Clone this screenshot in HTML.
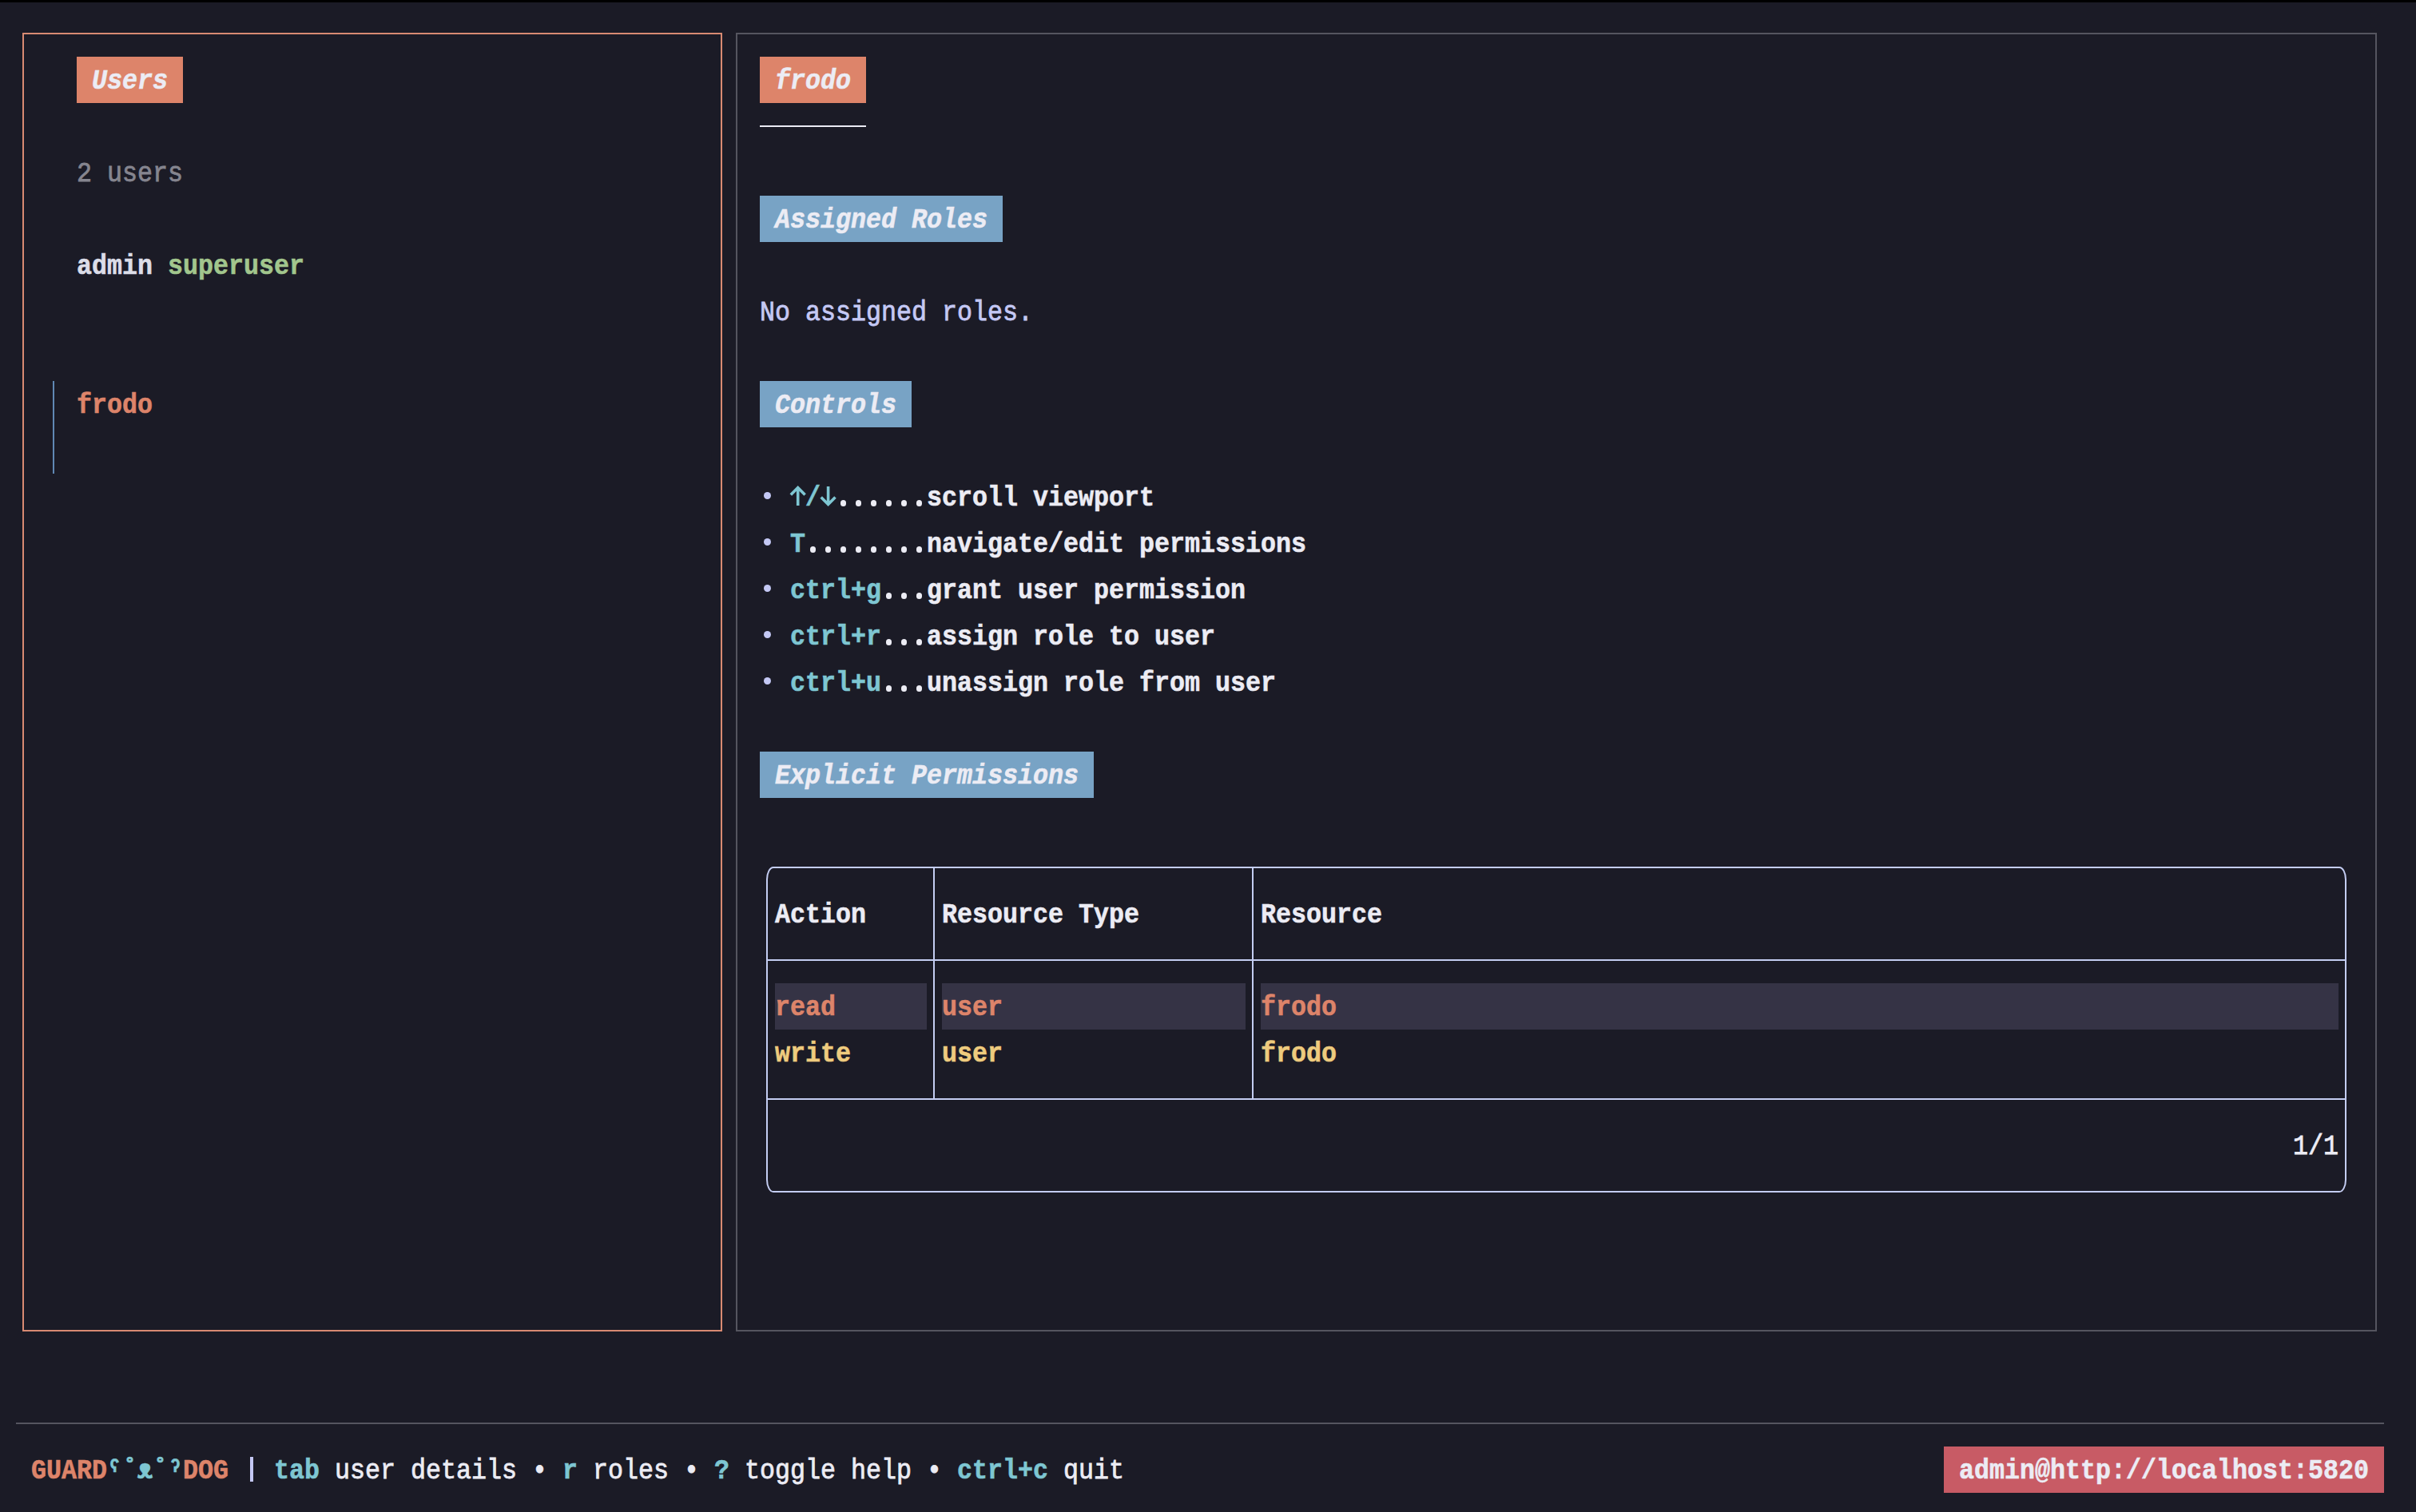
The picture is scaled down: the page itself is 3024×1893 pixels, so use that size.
<!DOCTYPE html>
<html><head><meta charset="utf-8"><style>
html,body{margin:0;padding:0;}
body{width:3024px;height:1893px;background:#1b1b26;position:relative;overflow:hidden;font-family:"Liberation Mono",monospace;}
body>div{position:absolute;}
.t{position:absolute;white-space:pre;font-size:35px;line-height:58px;transform:scaleX(0.90476);transform-origin:0 0;}
</style></head><body>
<div style="left:0px;top:0px;width:3024px;height:3px;background:#000"></div>
<div style="left:28px;top:41px;width:876px;height:2px;background:#d88a72"></div>
<div style="left:28px;top:1665px;width:876px;height:2px;background:#d88a72"></div>
<div style="left:28px;top:41px;width:2px;height:1626px;background:#d88a72"></div>
<div style="left:902px;top:41px;width:2px;height:1626px;background:#d88a72"></div>
<div style="left:96px;top:71px;width:133px;height:58px;background:#dd846a"></div>
<span class="t" style="left:115px;top:73px;color:#ececf4;font-weight:bold;-webkit-text-stroke:0.6px #ececf4;font-style:italic;">Users</span>
<span class="t" style="left:96px;top:189px;color:#85858f;-webkit-text-stroke:0.8px #85858f;">2 users</span>
<span class="t" style="left:96px;top:305px;color:#dcdde8;font-weight:bold;-webkit-text-stroke:0.6px #dcdde8;">admin</span>
<span class="t" style="left:210px;top:305px;color:#a2c68d;font-weight:bold;-webkit-text-stroke:0.6px #a2c68d;">superuser</span>
<span class="t" style="left:96px;top:479px;color:#dd846a;font-weight:bold;-webkit-text-stroke:0.6px #dd846a;">frodo</span>
<div style="left:66px;top:477px;width:2px;height:116px;background:#6088b4"></div>
<div style="left:921px;top:41px;width:2054px;height:2px;background:#55555f"></div>
<div style="left:921px;top:1665px;width:2054px;height:2px;background:#55555f"></div>
<div style="left:921px;top:41px;width:2px;height:1626px;background:#55555f"></div>
<div style="left:2973px;top:41px;width:2px;height:1626px;background:#55555f"></div>
<div style="left:951px;top:71px;width:133px;height:58px;background:#dd846a"></div>
<span class="t" style="left:970px;top:73px;color:#ececf4;font-weight:bold;-webkit-text-stroke:0.6px #ececf4;font-style:italic;">frodo</span>
<div style="left:951px;top:157px;width:133px;height:2px;background:#ececf4"></div>
<div style="left:951px;top:245px;width:304px;height:58px;background:#78a3c5"></div>
<span class="t" style="left:970px;top:247px;color:#ececf4;font-weight:bold;-webkit-text-stroke:0.6px #ececf4;font-style:italic;">Assigned Roles</span>
<span class="t" style="left:951px;top:363px;color:#c4c8f4;-webkit-text-stroke:0.8px #c4c8f4;">No assigned roles.</span>
<div style="left:951px;top:477px;width:190px;height:58px;background:#78a3c5"></div>
<span class="t" style="left:970px;top:479px;color:#ececf4;font-weight:bold;-webkit-text-stroke:0.6px #ececf4;font-style:italic;">Controls</span>
<div style="left:956.00px;top:616.30px;width:9px;height:9px;border-radius:50%;background:#c4c8f4"></div>
<span class="t" style="left:1008px;top:595px;color:#7ec6d2;font-weight:bold;-webkit-text-stroke:0.6px #7ec6d2;">/</span>
<svg style="position:absolute;left:0;top:593px" width="1100" height="58"><g fill="none" stroke="#7ec6d2" stroke-width="3.6"><path d="M998.7 40 V18 M989.8 26.5 L998.7 17.5 L1007.6 26.5"/><path d="M1036.6 16 V38 M1027.7 29.5 L1036.6 38.5 L1045.5 29.5"/></g></svg>
<div style="left:1051.75px;top:626.25px;width:7.5px;height:7.5px;border-radius:50%;background:#ececf4"></div>
<div style="left:1070.75px;top:626.25px;width:7.5px;height:7.5px;border-radius:50%;background:#ececf4"></div>
<div style="left:1089.75px;top:626.25px;width:7.5px;height:7.5px;border-radius:50%;background:#ececf4"></div>
<div style="left:1108.75px;top:626.25px;width:7.5px;height:7.5px;border-radius:50%;background:#ececf4"></div>
<div style="left:1127.75px;top:626.25px;width:7.5px;height:7.5px;border-radius:50%;background:#ececf4"></div>
<div style="left:1146.75px;top:626.25px;width:7.5px;height:7.5px;border-radius:50%;background:#ececf4"></div>
<span class="t" style="left:1160px;top:595px;color:#ececf4;font-weight:bold;-webkit-text-stroke:0.6px #ececf4;">scroll viewport</span>
<div style="left:956.00px;top:674.30px;width:9px;height:9px;border-radius:50%;background:#c4c8f4"></div>
<span class="t" style="left:989px;top:653px;color:#7ec6d2;font-weight:bold;-webkit-text-stroke:0.6px #7ec6d2;">T</span>
<div style="left:1013.75px;top:684.25px;width:7.5px;height:7.5px;border-radius:50%;background:#ececf4"></div>
<div style="left:1032.75px;top:684.25px;width:7.5px;height:7.5px;border-radius:50%;background:#ececf4"></div>
<div style="left:1051.75px;top:684.25px;width:7.5px;height:7.5px;border-radius:50%;background:#ececf4"></div>
<div style="left:1070.75px;top:684.25px;width:7.5px;height:7.5px;border-radius:50%;background:#ececf4"></div>
<div style="left:1089.75px;top:684.25px;width:7.5px;height:7.5px;border-radius:50%;background:#ececf4"></div>
<div style="left:1108.75px;top:684.25px;width:7.5px;height:7.5px;border-radius:50%;background:#ececf4"></div>
<div style="left:1127.75px;top:684.25px;width:7.5px;height:7.5px;border-radius:50%;background:#ececf4"></div>
<div style="left:1146.75px;top:684.25px;width:7.5px;height:7.5px;border-radius:50%;background:#ececf4"></div>
<span class="t" style="left:1160px;top:653px;color:#ececf4;font-weight:bold;-webkit-text-stroke:0.6px #ececf4;">navigate/edit permissions</span>
<div style="left:956.00px;top:732.30px;width:9px;height:9px;border-radius:50%;background:#c4c8f4"></div>
<span class="t" style="left:989px;top:711px;color:#7ec6d2;font-weight:bold;-webkit-text-stroke:0.6px #7ec6d2;">ctrl+g</span>
<div style="left:1108.75px;top:742.25px;width:7.5px;height:7.5px;border-radius:50%;background:#ececf4"></div>
<div style="left:1127.75px;top:742.25px;width:7.5px;height:7.5px;border-radius:50%;background:#ececf4"></div>
<div style="left:1146.75px;top:742.25px;width:7.5px;height:7.5px;border-radius:50%;background:#ececf4"></div>
<span class="t" style="left:1160px;top:711px;color:#ececf4;font-weight:bold;-webkit-text-stroke:0.6px #ececf4;">grant user permission</span>
<div style="left:956.00px;top:790.30px;width:9px;height:9px;border-radius:50%;background:#c4c8f4"></div>
<span class="t" style="left:989px;top:769px;color:#7ec6d2;font-weight:bold;-webkit-text-stroke:0.6px #7ec6d2;">ctrl+r</span>
<div style="left:1108.75px;top:800.25px;width:7.5px;height:7.5px;border-radius:50%;background:#ececf4"></div>
<div style="left:1127.75px;top:800.25px;width:7.5px;height:7.5px;border-radius:50%;background:#ececf4"></div>
<div style="left:1146.75px;top:800.25px;width:7.5px;height:7.5px;border-radius:50%;background:#ececf4"></div>
<span class="t" style="left:1160px;top:769px;color:#ececf4;font-weight:bold;-webkit-text-stroke:0.6px #ececf4;">assign role to user</span>
<div style="left:956.00px;top:848.30px;width:9px;height:9px;border-radius:50%;background:#c4c8f4"></div>
<span class="t" style="left:989px;top:827px;color:#7ec6d2;font-weight:bold;-webkit-text-stroke:0.6px #7ec6d2;">ctrl+u</span>
<div style="left:1108.75px;top:858.25px;width:7.5px;height:7.5px;border-radius:50%;background:#ececf4"></div>
<div style="left:1127.75px;top:858.25px;width:7.5px;height:7.5px;border-radius:50%;background:#ececf4"></div>
<div style="left:1146.75px;top:858.25px;width:7.5px;height:7.5px;border-radius:50%;background:#ececf4"></div>
<span class="t" style="left:1160px;top:827px;color:#ececf4;font-weight:bold;-webkit-text-stroke:0.6px #ececf4;">unassign role from user</span>
<div style="left:951px;top:941px;width:418px;height:58px;background:#78a3c5"></div>
<span class="t" style="left:970px;top:943px;color:#ececf4;font-weight:bold;-webkit-text-stroke:0.6px #ececf4;font-style:italic;">Explicit Permissions</span>
<div style="left:959px;top:1201px;width:1978px;height:2px;background:#c4cdf2"></div>
<div style="left:959px;top:1375px;width:1978px;height:2px;background:#c4cdf2"></div>
<svg style="position:absolute;left:0;top:0" width="3024" height="1893"><path d="M 960 1101 A 8 15 0 0 1 968 1086 H 2928 A 8 15 0 0 1 2936 1101 V 1477 A 8 15 0 0 1 2928 1492 H 968 A 8 15 0 0 1 960 1477 Z" fill="none" stroke="#c4cdf2" stroke-width="2"/></svg>
<div style="left:1168px;top:1085px;width:2px;height:292px;background:#c4cdf2"></div>
<div style="left:1567px;top:1085px;width:2px;height:292px;background:#c4cdf2"></div>
<span class="t" style="left:970px;top:1117px;color:#ececf4;font-weight:bold;-webkit-text-stroke:0.6px #ececf4;">Action</span>
<span class="t" style="left:1179px;top:1117px;color:#ececf4;font-weight:bold;-webkit-text-stroke:0.6px #ececf4;">Resource Type</span>
<span class="t" style="left:1578px;top:1117px;color:#ececf4;font-weight:bold;-webkit-text-stroke:0.6px #ececf4;">Resource</span>
<div style="left:970px;top:1231px;width:190px;height:58px;background:#353345"></div>
<div style="left:1179px;top:1231px;width:380px;height:58px;background:#353345"></div>
<div style="left:1578px;top:1231px;width:1349px;height:58px;background:#353345"></div>
<span class="t" style="left:970px;top:1233px;color:#dd846a;font-weight:bold;-webkit-text-stroke:0.6px #dd846a;">read</span>
<span class="t" style="left:1179px;top:1233px;color:#dd846a;font-weight:bold;-webkit-text-stroke:0.6px #dd846a;">user</span>
<span class="t" style="left:1578px;top:1233px;color:#dd846a;font-weight:bold;-webkit-text-stroke:0.6px #dd846a;">frodo</span>
<span class="t" style="left:970px;top:1291px;color:#eecb7e;font-weight:bold;-webkit-text-stroke:0.6px #eecb7e;">write</span>
<span class="t" style="left:1179px;top:1291px;color:#eecb7e;font-weight:bold;-webkit-text-stroke:0.6px #eecb7e;">user</span>
<span class="t" style="left:1578px;top:1291px;color:#eecb7e;font-weight:bold;-webkit-text-stroke:0.6px #eecb7e;">frodo</span>
<span class="t" style="left:2870px;top:1407px;color:#ececf4;-webkit-text-stroke:0.8px #ececf4;">1/1</span>
<div style="left:20px;top:1781px;width:2964px;height:2px;background:#55555f"></div>
<span class="t" style="left:39px;top:1813px;color:#dd846a;font-weight:bold;-webkit-text-stroke:0.6px #dd846a;">GUARD</span>
<span class="t" style="left:134px;top:1813px;color:#7ec6d2;font-weight:bold;-webkit-text-stroke:0.6px #7ec6d2;">ˁ˚ᴥ˚ˀ</span>
<span class="t" style="left:229px;top:1813px;color:#dd846a;font-weight:bold;-webkit-text-stroke:0.6px #dd846a;">DOG</span>
<div style="left:313px;top:1824px;width:3.5px;height:31px;background:#c4c8f4"></div>
<span class="t" style="left:343px;top:1813px;color:#7ec6d2;font-weight:bold;-webkit-text-stroke:0.6px #7ec6d2;">tab</span>
<span class="t" style="left:400px;top:1813px;color:#ececf4;-webkit-text-stroke:0.8px #ececf4;"> user details • </span>
<span class="t" style="left:704px;top:1813px;color:#7ec6d2;font-weight:bold;-webkit-text-stroke:0.6px #7ec6d2;">r</span>
<span class="t" style="left:723px;top:1813px;color:#ececf4;-webkit-text-stroke:0.8px #ececf4;"> roles • </span>
<span class="t" style="left:894px;top:1813px;color:#7ec6d2;font-weight:bold;-webkit-text-stroke:0.6px #7ec6d2;">?</span>
<span class="t" style="left:913px;top:1813px;color:#ececf4;-webkit-text-stroke:0.8px #ececf4;"> toggle help • </span>
<span class="t" style="left:1198px;top:1813px;color:#7ec6d2;font-weight:bold;-webkit-text-stroke:0.6px #7ec6d2;">ctrl+c</span>
<span class="t" style="left:1312px;top:1813px;color:#ececf4;-webkit-text-stroke:0.8px #ececf4;"> quit</span>
<div style="left:2433px;top:1811px;width:551px;height:58px;background:#c85b65"></div>
<span class="t" style="left:2452px;top:1813px;color:#ececf4;font-weight:bold;-webkit-text-stroke:0.6px #ececf4;">admin@http</span>
<span class="t" style="left:2642px;top:1813px;color:#ececf4;font-weight:bold;-webkit-text-stroke:0.6px #ececf4;">://localhost:5820</span>
</body></html>
